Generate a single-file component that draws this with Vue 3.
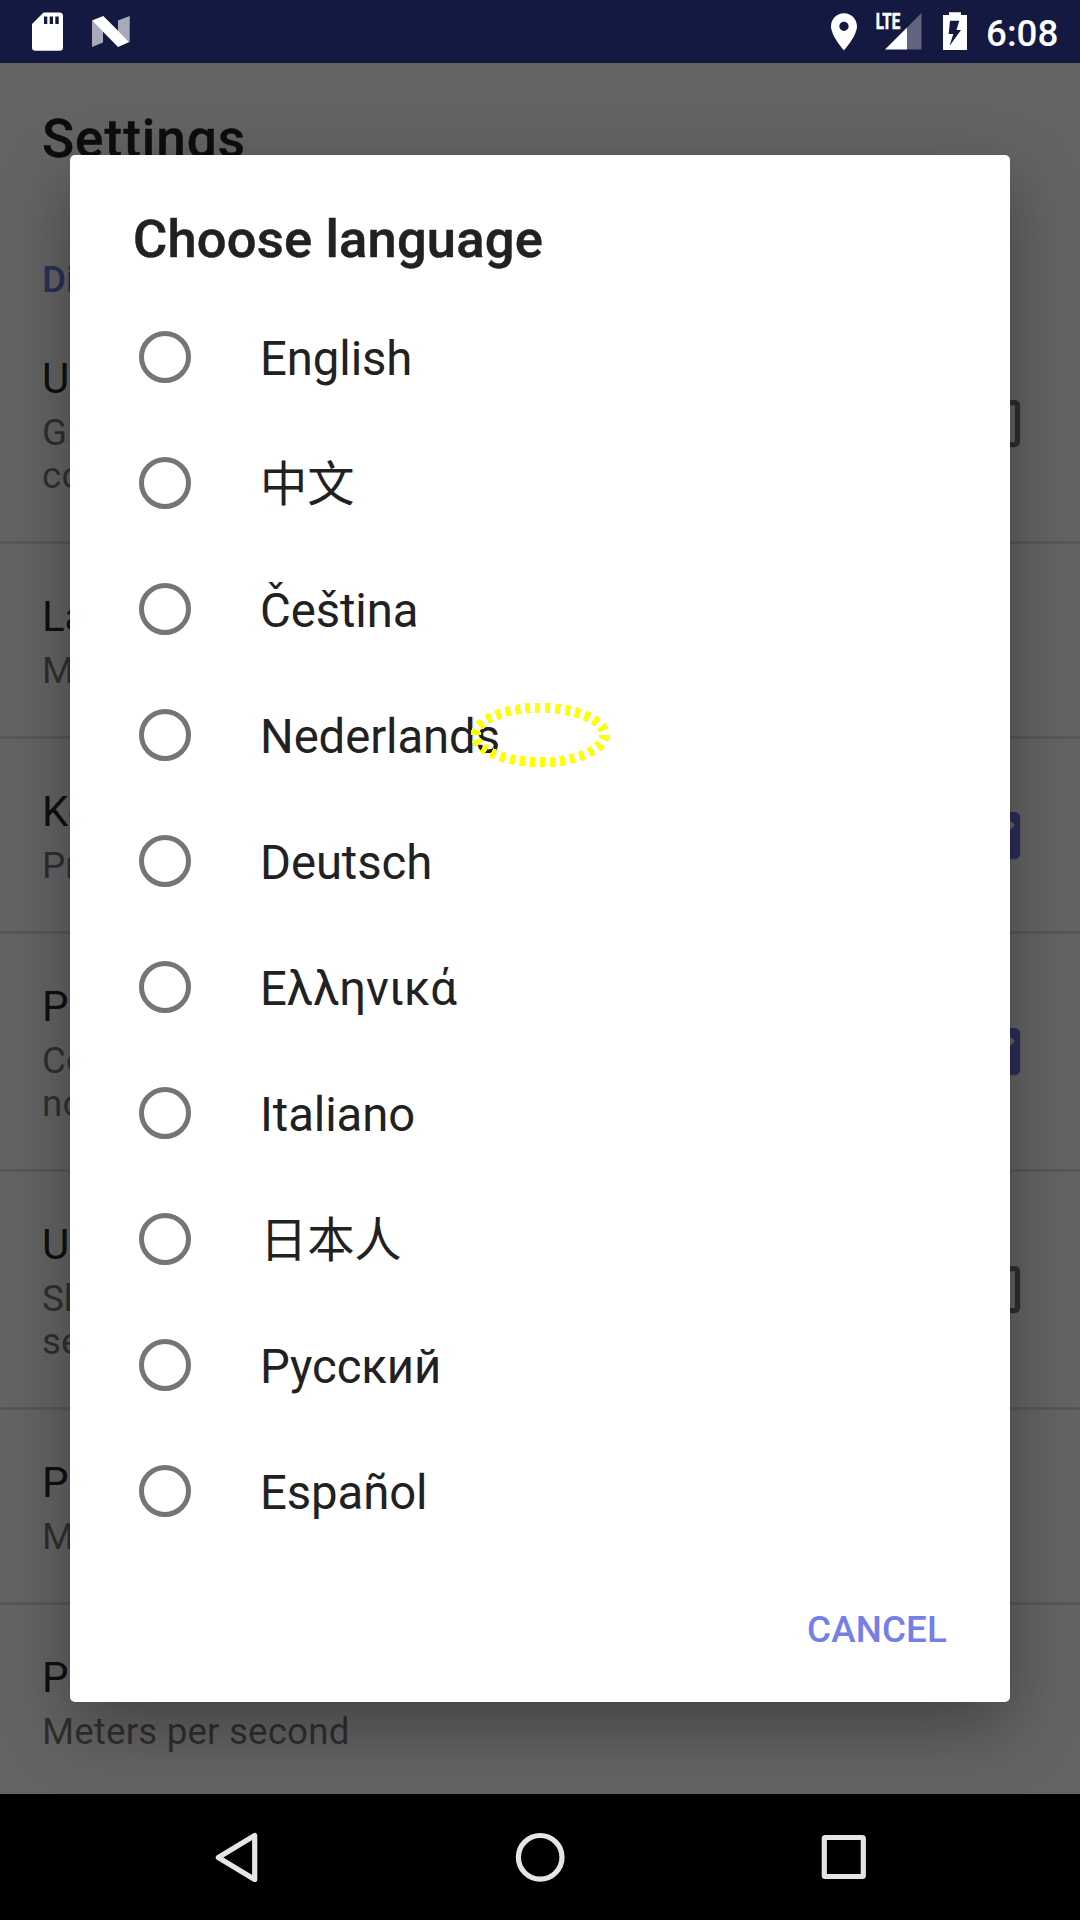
<script setup>
const settings = [
  { title: 'Use', summary: ['Give', 'compass'], box: 'off' },
  { title: 'Language', summary: ['My language'] },
  { title: 'Keep on', summary: ['Prevent'], box: 'on' },
  { title: 'Play', summary: ['Confirm', 'not'], box: 'on' },
  { title: 'Use', summary: ['Show', 'sensors'], box: 'off' },
  { title: 'Pressure', summary: ['Metric'] },
  { title: 'Preferred speed', summary: ['Meters per second'] },
]

const languages = [
  'English', '中文', 'Čeština', 'Nederlands', 'Deutsch',
  'Ελληνικά', 'Italiano', '日本人', 'Русский', 'Español',
]
</script>

<template>
  <div class="phone">
    <header class="status">
      <svg class="status-left" width="140" height="63" viewBox="0 0 140 63">
        <path fill="#fff" fill-rule="evenodd" d="M43.500 12.500H59.500Q63 12.500 63 16V47.500Q63 50.700 59.500 50.700H35.500Q32 50.700 32 47.500V24ZM44 16.500V24H47.300V16.500ZM49.700 16.500V24H53V16.500ZM55.300 16.500V24H58.700V16.500Z" />
        <path fill="#fff" fill-opacity=".63" d="M92 20.500L103 31V42.500L92 47ZM118 20.500L129.700 16V42L118 31Z" />
        <path fill="#fff" d="M92 20.500L103.300 16L129.300 42L118 47Z" />
      </svg>
      <div class="status-right">
        <svg width="168" height="63" viewBox="812 0 168 63">
          <g transform="translate(821.7 9.600) scale(1.857)">
            <path fill="#fff" d="M12 2C8.130 2 5 5.130 5 9c0 5.250 7 13 7 13s7-7.750 7-13c0-3.870-3.130-7-7-7zm0 9.500c-1.380 0-2.500-1.120-2.500-2.500s1.120-2.500 2.500-2.500 2.500 1.120 2.500 2.500-1.120 2.500-2.500 2.500z" />
          </g>
          <text class="lte" x="875.700" y="29.300" textLength="24.500" lengthAdjust="spacingAndGlyphs">LTE</text>
          <path fill="#fff" fill-opacity=".33" d="M907 27.500L921.500 13V49.500H907Z" />
          <path fill="#fff" d="M885 49.500L907 27.500V49.500Z" />
          <path fill="#fff" fill-rule="evenodd" d="M949 12.300H961V15H967V50H943V15H949ZM950 20.700L948.700 34H953.300L949.500 46L961 30H956.500L959.300 20.700Z" />
        </svg>
        <span class="clock">6:08</span>
      </div>
    </header>

    <main class="page">
      <h1 class="page-title">Settings</h1>
      <h2 class="category">Display</h2>
      <section v-for="(s, i) in settings" :key="i" class="setting">
        <div class="setting-text">
          <div class="setting-title">{{ s.title }}</div>
          <div v-for="line in s.summary" :key="line" class="summary">{{ line }}</div>
        </div>
        <svg v-if="s.box" class="box" :class="s.box" width="63" height="63" viewBox="0 0 24 24">
          <path v-if="s.box === 'on'" d="M19 3H5c-1.110 0-2 .9-2 2v14c0 1.100.89 2 2 2h14c1.110 0 2-.9 2-2V5c0-1.100-.89-2-2-2zm-9 14l-5-5 1.410-1.410L10 14.170l7.590-7.590L19 8l-9 9z" />
          <path v-else d="M19 5v14H5V5h14m0-2H5c-1.100 0-2 .9-2 2v14c0 1.100.9 2 2 2h14c1.100 0 2-.9 2-2V5c0-1.100-.9-2-2-2z" />
        </svg>
      </section>
      <div class="scrim"></div>
      <div class="dialog">
        <h3 class="dialog-title">Choose language</h3>
        <ul class="options">
          <li v-for="l in languages" :key="l" class="option">
            <span class="radio"></span>
            <span class="label">{{ l }}</span>
          </li>
        </ul>
        <div class="actions"><span class="cancel">CANCEL</span></div>
        <svg class="marker" width="150" height="74" viewBox="0 0 150 74">
          <ellipse cx="75" cy="37" rx="64.500" ry="27.200" fill="none" stroke="#ff0" stroke-width="10" stroke-dasharray="5 5" shape-rendering="crispEdges" />
        </svg>
      </div>
    </main>

    <nav class="nav">
      <svg width="63" height="63" viewBox="0 0 63 63"><path d="M49.700 9.500V53.500L13.300 31.500Z" /></svg>
      <svg width="63" height="63" viewBox="0 0 63 63"><circle cx="31.200" cy="31.300" r="21.800" /></svg>
      <svg width="63" height="63" viewBox="0 0 63 63"><rect x="11.300" y="11.500" width="39" height="39" rx="1" /></svg>
    </nav>
  </div>
</template>

<style>
body {
  background: #000;
}
</style>

<style scoped>
.phone {
  width: 1080px;
  height: 1920px;
  display: flex;
  flex-direction: column;
  overflow: hidden;
  font-family: Roboto, "Noto Sans CJK SC", "Noto Sans CJK JP", sans-serif;
}
h1, h2, h3, ul {
  margin: 0;
  padding: 0;
}
h1, h2, h3 {
  font-weight: 500;
}
.status {
  height: 63px;
  flex: none;
  display: flex;
  justify-content: space-between;
  background: #141941;
  color: #fff;
}
.status-right {
  display: flex;
  width: 268px;
}
.status svg {
  display: block;
}
.lte {
  font-size: 22px;
  font-weight: 700;
  fill: #fff;
  stroke: #fff;
  stroke-width: .600;
}
.clock {
  margin-left: 6px;
  font-size: 36.750px;
  font-weight: 500;
  line-height: 67px;
}
.page {
  position: relative;
  height: 1731px;
  flex: none;
  overflow: hidden;
  background: #fafafa;
  color: rgba(0, 0, 0, .87);
}
.page-title {
  padding: 45px 42px 0;
  font-size: 53px;
  line-height: 62px;
  letter-spacing: 1px;
  -webkit-text-stroke: .400px #212121;
}
.category {
  padding: 88px 42px 0;
  height: 48px;
  font-size: 36.750px;
  line-height: 43px;
  color: #6b74e0;
}
.setting {
  display: flex;
  align-items: center;
  justify-content: space-between;
  padding: 48px 52px 44px 42px;
  border-bottom: 3px solid rgba(0, 0, 0, .12);
}
.setting-title {
  margin-bottom: 8px;
  font-size: 42px;
  line-height: 49px;
}
.summary {
  font-size: 36.750px;
  line-height: 43px;
  letter-spacing: .150px;
  color: rgba(0, 0, 0, .54);
}
.box {
  flex: none;
  margin: -12px 0 -8px;
  fill: rgba(0, 0, 0, .54);
}
.box.on {
  fill: #6b74e0;
}
.scrim {
  position: absolute;
  inset: 0;
  background: rgba(0, 0, 0, .6);
}
.dialog {
  position: absolute;
  left: 70px;
  top: 92px;
  width: 940px;
  height: 1547px;
  display: flex;
  flex-direction: column;
  border-radius: 5px;
  background: #fff;
  color: #212121;
  box-shadow: 0 24px 70px rgba(0, 0, 0, .34);
}
.dialog-title {
  height: 86px;
  padding: 53px 63px 0;
  font-size: 52.500px;
  line-height: 62px;
  letter-spacing: .180px;
  -webkit-text-stroke: .500px #212121;
}
.options {
  list-style: none;
}
.option {
  height: 126px;
  display: flex;
  align-items: center;
  padding-left: 69px;
}
.radio {
  box-sizing: border-box;
  width: 52px;
  height: 52px;
  border: 5px solid #757575;
  border-radius: 50%;
}
.label {
  margin-left: 69px;
  padding-top: 3px;
  font-size: 47.250px;
  line-height: 56px;
  letter-spacing: -.080px;
}
.actions {
  display: flex;
  justify-content: flex-end;
  padding: 53px 63px 0;
}
.cancel {
  font-size: 36.750px;
  font-weight: 500;
  line-height: 45px;
  letter-spacing: .150px;
  color: #757fe8;
}
.marker {
  position: absolute;
  left: 394.500px;
  top: 543px;
}
.nav {
  height: 126px;
  flex: none;
  display: flex;
  align-items: center;
  justify-content: center;
  gap: 241px;
  background: #000;
}
.nav svg {
  fill: none;
  stroke: #e5e5e5;
  stroke-width: 5.200;
  stroke-linejoin: round;
}
</style>
